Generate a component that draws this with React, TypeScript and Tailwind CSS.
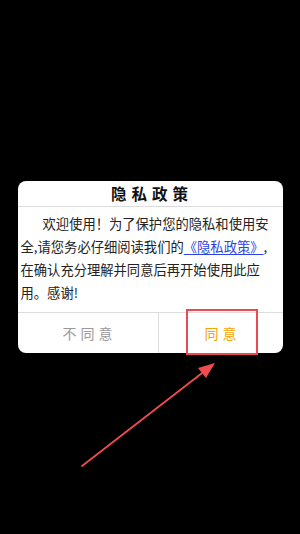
import React from 'react';

const App: React.FC = () => {
  return (
    <div className="relative flex h-[534px] w-[300px] items-center justify-center bg-black font-['Noto_Sans_CJK_SC',sans-serif]">
      {/* Dialog */}
      <div className="w-[265px] rounded-lg bg-white">
        <div className="flex h-[26px] items-center justify-center border-b border-[#dcdcdc] pl-[4px] text-[15.5px] font-bold tracking-[5px] text-[#111]">
          隐私政策
        </div>
        <div className="px-[3px] pb-[8px] pt-[5px] text-[13.3px] leading-[23px] text-[#222]">
          <p className="pl-[22px]">欢迎使用！为了保护您的隐私和使用安</p>
          <p>
            全,请您务必仔细阅读我们的
            <span className="text-[#2d43e6] underline underline-offset-2">《隐私政策》</span>,
          </p>
          <p>在确认充分理解并同意后再开始使用此应</p>
          <p>用。感谢!</p>
        </div>
        <div className="flex h-[41px] border-t border-[#dcdcdc]">
          <button className="flex w-[141px] items-center justify-center border-r border-[#dcdcdc] pl-[4px] text-[14px] tracking-[4px] text-[#999]">
            不同意
          </button>
          <button className="relative flex flex-1 items-center justify-center pl-[4px] text-[14px] tracking-[4px] text-[#f7a300]">
            同意
            <span className="absolute left-[27px] top-[-4px] h-[46px] w-[72px] border-2 border-[#ec4a4f]" />
          </button>
        </div>
      </div>

      {/* Arrow */}
      <svg className="absolute left-0 top-0" width="300" height="534" viewBox="0 0 300 534">
        <path d="M82 466 L206 370" stroke="#f04b4d" strokeWidth="1.8" strokeLinecap="round" />
        <path d="M215 363 L198 368 L206 378 Z" fill="#f04b4d" />
      </svg>
    </div>
  );
};

export default App;
